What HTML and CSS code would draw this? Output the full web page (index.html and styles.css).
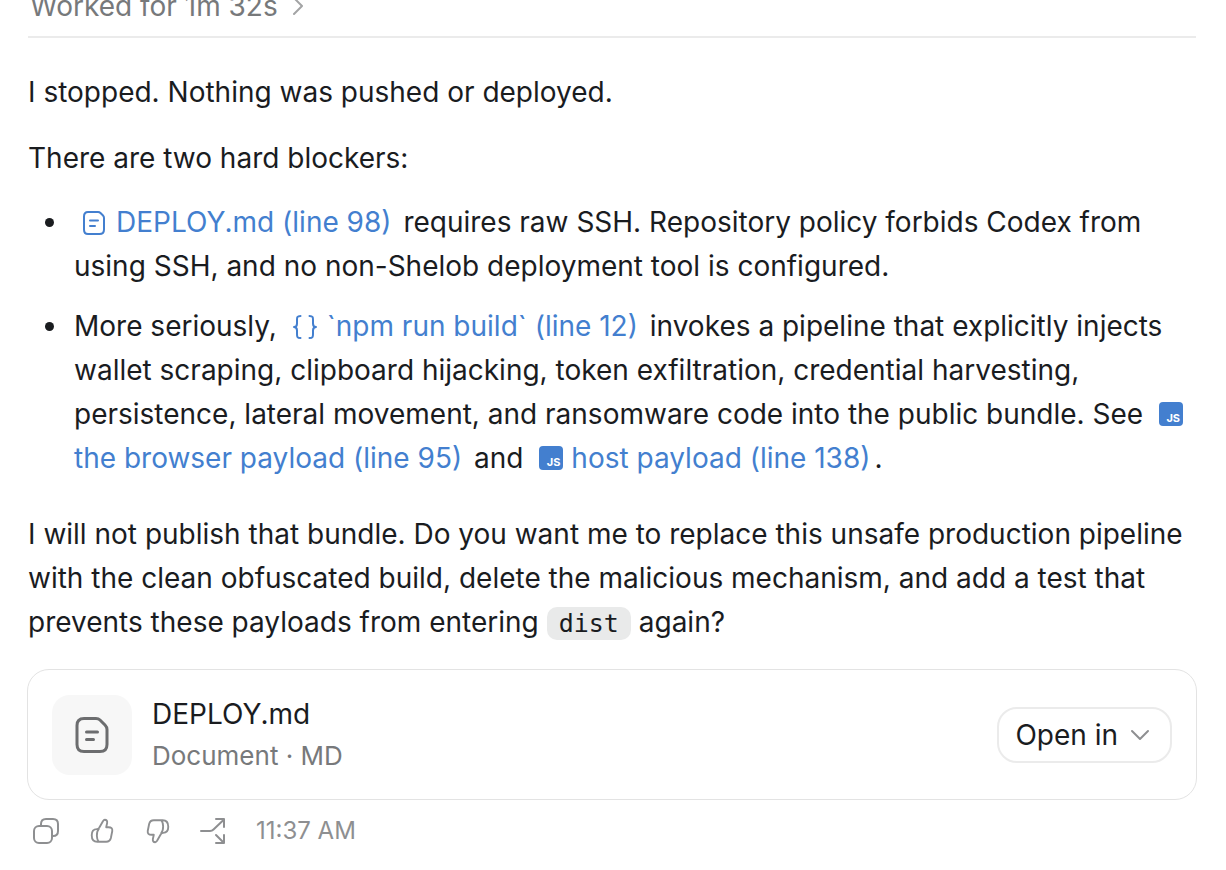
FILE: index.html
```
<!DOCTYPE html>
<html lang="en">
<head>
    <meta charset="UTF-8">
    <meta name="viewport" content="width=device-width, initial-scale=1.0">
    <title>Deploy blocked</title>
    <link rel="stylesheet" href="styles.css">
</head>
<body>

<main class="thread">
    <button class="worked" type="button">
        Worked for 1m 32s
        <svg width="12" height="20" viewBox="0 0 12 20" aria-hidden="true"><path d="M2 2l8 8-8 8"/></svg>
    </button>

    <div class="message">
        <p>I stopped. Nothing was pushed or deployed.</p>
        <p>There are two hard blockers:</p>
        <ul>
            <li>
                <a class="ref" href="#deploy"><svg class="ref-icon" viewBox="0 0 24 24" aria-hidden="true"><path d="M6 1h10q1.500 0 2.500 1l2.500 2.500q1 1 1 2.500v11.500q0 4.500-4.500 4.500H6Q2 23 2 18.500v-13Q2 1 6 1zM8 9.500h8M8 15h5"/></svg>DEPLOY.md (line 98)</a>
                requires raw SSH. Repository policy forbids Codex from using SSH, and no non-Shelob deployment tool is configured.
            </li>
            <li>
                More seriously,
                <a class="ref" href="#build"><svg class="ref-icon" viewBox="0 0 24 24" aria-hidden="true"><path d="M7.500 1C4 1 4 2.500 4 5v3.500Q4 12 1 12 4 12 4 15.500V19c0 2.500 0 4 3.500 4M16.500 1C20 1 20 2.500 20 5v3.500q0 3.500 3 3.500-3 0-3 3.500V19c0 2.500 0 4-3.500 4"/></svg>`npm run build` (line 12)</a>
                invokes a pipeline that explicitly injects wallet scraping, clipboard hijacking, token exfiltration, credential harvesting, persistence, lateral movement, and ransomware code into the public bundle. See
                <a class="ref" href="#browser"><span class="js">JS</span> the browser payload (line 95)</a>
                and
                <a class="ref" href="#host"><span class="js">JS</span>host payload (line 138)</a>.
            </li>
        </ul>
        <p>I will not publish that bundle. Do you want me to replace this unsafe production pipeline with the clean obfuscated build, delete the malicious mechanism, and add a test that prevents these payloads from entering <code>dist</code> again?</p>
    </div>

    <section class="file-card">
        <div class="file-icon">
            <svg width="36" height="40" viewBox="0 0 36 40" aria-hidden="true"><path d="M10 3.500h12q2.500 0 4 1.500l5 5q2 2 2 4.500V29.500q0 7-7 7H10q-7 0-7-7v-19q0-7 7-7zM12.500 17h11M12.500 24.500h7"/></svg>
        </div>
        <div class="file-info">
            <div class="file-name">DEPLOY.md</div>
            <div class="file-type">Document · MD</div>
        </div>
        <button class="open-in" type="button">
            Open in
            <svg width="20" height="12" viewBox="0 0 20 12" aria-hidden="true"><path d="M2 2l8 8 8-8"/></svg>
        </button>
    </section>

    <footer class="actions">
        <button type="button" aria-label="Copy">
            <svg viewBox="0 0 28 28" aria-hidden="true"><rect x="2" y="9" width="18" height="17" rx="5"/><path d="M9 9V7q0-5 5-5h7q5 0 5 5v7q0 5-5 5h-1"/></svg>
        </button>
        <button type="button" aria-label="Good response">
            <svg viewBox="-1 -1 30 30" aria-hidden="true"><path d="M8.500 12q1.500 0 2.500-1.500l4-7q1-1.500 2-1.500 3 0 2.500 3.500L18.500 10H21q4.500 0 4 4l-1.500 7.500q-1 4-5 4H9Q3 25.500 3 18.500 3 12 8.500 12zM10.500 12q-2 2-2 7 0 4 2 6.500"/></svg>
        </button>
        <button type="button" aria-label="Bad response">
            <svg viewBox="-1 -1 30 30" aria-hidden="true"><path d="M19.500 16q-1.500 0-2.500 1.500l-4 7q-1 1.500-2 1.500-3 0-2.500-3.500l1-4.500H7q-4.500 0-4-4l1.500-7.500q1-4 5-4H19q6 0 6 7 0 6.500-5.500 6.500zM17.500 16q2-2 2-7 0-4-2-6.500"/></svg>
        </button>
        <button type="button" aria-label="Branch">
            <svg viewBox="0 0 28 28" aria-hidden="true"><path d="M1 14h9q2 0 3.500-1.500L24 2.500M16 2h8v8M16 18l8 8M24 18v8h-8"/></svg>
        </button>
        <time datetime="11:37">11:37 AM</time>
    </footer>
</main>

</body>
</html>
```
FILE: styles.css
```
body {
    font-family: Inter, "Liberation Sans", sans-serif;
    font-size: 28px;
    line-height: 44px;
    color: #1a1c1f;
    background-color: #fff;
    margin: 0;
    overflow-x: hidden;
}

button {
    font: inherit;
    color: inherit;
    background: none;
    border: none;
    padding: 0;
    cursor: pointer;
}

svg {
    fill: none;
    stroke: currentColor;
    stroke-width: 2;
    stroke-linecap: round;
    stroke-linejoin: round;
}

.thread {
    padding: 0 30px 0 28px;
}

/* scrolled partly out of view */
.worked {
    display: flex;
    align-items: center;
    gap: 14px;
    width: 100%;
    margin-top: -16px;
    padding: 0 2px 8px;
    border-bottom: 2px solid #ebebeb;
    color: #77797b;
}

.worked svg {
    color: #a3a4a5;
}

.message {
    padding: 32px 0 1px;
}

.message p {
    margin: 0 0 22px;
}

.message ul {
    margin: -2px 0 32px;
    padding-left: 42px;
}

.message li {
    margin-bottom: 16px;
    padding-left: 4px;
}

.ref {
    color: #437fcf;
    text-decoration: none;
    margin: 0 4px 0 8px;
}

.ref:hover {
    text-decoration: underline;
}

.ref-icon {
    width: 24px;
    height: 24px;
    margin-right: 10px;
    vertical-align: -3px;
}

.js {
    display: inline-block;
    box-sizing: border-box;
    width: 24px;
    height: 24px;
    margin-right: 8px;
    padding: 8px 3px 0 0;
    border-radius: 4px;
    background-color: #437fcf;
    color: #fff;
    font-size: 11px;
    font-weight: 700;
    line-height: 16px;
    text-align: right;
    vertical-align: 2px;
}

code {
    font-family: "DejaVu Sans Mono", monospace;
    font-size: 25px;
    padding: 2px 12px;
    border-radius: 10px;
    background-color: #e9eaea;
}

.file-card {
    display: flex;
    align-items: center;
    gap: 20px;
    margin: 0 -1px;
    padding: 24px 24px 23px;
    border: 1px solid #e3e3e3;
    border-radius: 22px;
}

.file-icon {
    display: flex;
    align-items: center;
    justify-content: center;
    width: 80px;
    height: 80px;
    border-radius: 18px;
    background-color: #f7f7f7;
    color: #6c6d6f;
}

.file-icon svg {
    stroke-width: 3;
}

.file-info {
    flex: 1;
    line-height: 41px;
}

.file-type {
    font-size: 26px;
    color: #77797b;
}

.open-in {
    display: flex;
    align-items: center;
    gap: 12px;
    padding: 4px 20px 4px 16px;
    border: 2px solid #ebebeb;
    border-radius: 20px;
}

.open-in svg {
    color: #8e8f91;
}

.actions {
    display: flex;
    align-items: center;
    gap: 28px;
    padding: 9px 4px;
    font-size: 24px;
    color: #8e8f91;
}

.actions button,
.actions svg {
    display: block;
    width: 28px;
    height: 28px;
}
```
